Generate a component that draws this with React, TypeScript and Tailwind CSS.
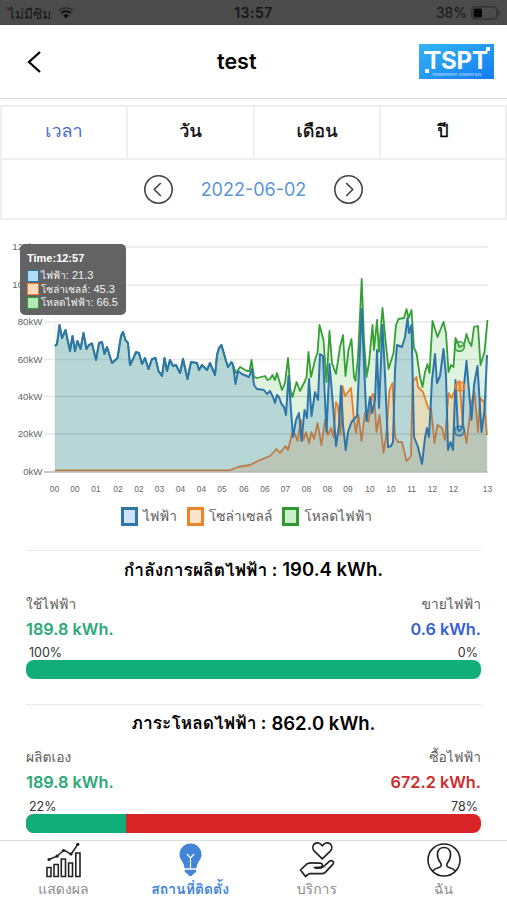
import React, { useState } from 'react';

type Point = [number, number];

const gridPoints: Point[] = [
  [55, 346], [57, 344], [59.5, 325], [62, 338], [65.5, 330], [70, 351], [72.5, 336], [75, 351], [77.5, 341], [80.5, 349],
  [83.5, 333], [86.5, 349], [89, 345], [92, 343.5], [96, 360], [99, 343], [102, 342], [104.5, 354], [107, 347], [112, 363],
  [117.5, 358], [121, 336], [123, 332], [125.5, 340], [128, 343], [130, 365], [133, 359], [136, 352], [139, 353], [142, 364],
  [145, 358], [148.5, 369], [152, 359], [155.5, 358], [158.5, 371], [162, 376], [164.5, 358], [167, 371], [170, 360], [173, 366],
  [176, 365], [180, 373], [183, 359], [187.5, 379], [191, 362], [197, 363], [199, 370], [202, 365], [207, 370], [210, 363],
  [215, 375], [217, 355], [219, 348], [221.5, 345], [226, 361], [228, 367], [231.5, 362], [233, 365], [235.5, 384], [238, 371],
  [242, 374], [249, 377], [252, 369], [254, 385], [257, 389], [264, 390], [267, 394], [270, 391], [273, 397], [275, 403],
  [277, 395], [279, 397], [281.5, 404], [284, 407], [286, 415], [288.5, 376], [293, 437], [296, 420], [299, 413], [301.5, 441],
  [304.5, 410], [307, 418], [309, 379], [311.5, 416], [315, 392], [318, 400], [320, 354], [323, 356], [326.5, 432], [329.5, 364],
  [333, 405], [336, 446], [339, 425], [341, 386], [343, 425], [345.7, 450], [348, 432], [351.5, 422], [357, 416], [361.7, 309],
  [366.5, 421], [370, 397], [372, 413], [375, 400], [377, 350], [379, 408], [382.5, 325], [385, 375], [388, 447], [391, 446],
  [393, 442], [395, 370], [397, 345], [402, 347], [405, 337], [407.5, 318], [409, 333], [411.5, 325], [414, 437], [418, 447],
  [422, 464], [425, 438], [427, 428], [429, 437], [432, 380], [435, 354], [437, 383], [440, 376], [443.5, 349], [446, 375],
  [448, 450], [450.5, 442], [453, 450], [455.5, 380], [458, 430], [459.5, 431], [462.5, 427], [464, 385], [466.5, 361], [471.5, 420],
  [474, 385], [477.5, 366], [481.5, 432], [484.5, 410], [487, 355],
];

const solarPoints: Point[] = [
  [55, 470.5], [229, 470.5], [238, 467], [250, 465], [260, 460], [270, 456], [276.5, 449], [280, 453], [285.5, 446], [288, 450],
  [292.5, 432], [295, 434], [297.5, 441], [301, 420], [303.5, 440], [306, 432], [309, 443], [311.5, 432], [314, 439], [317.5, 423],
  [321.5, 445], [325, 420], [328, 435], [331, 428], [333.5, 437], [336, 402], [338, 406], [340.5, 435], [342.5, 386], [345, 396],
  [351, 388], [354, 420], [356, 433], [358.5, 415], [361.5, 441], [365, 413], [368.5, 422], [372.5, 394], [374, 395], [376.5, 432],
  [379.5, 415], [383.5, 453], [386.5, 433], [389.5, 390], [392.5, 383], [395, 437], [398, 442], [402, 442], [406.5, 461], [411, 456],
  [412.5, 382], [416.5, 377], [418, 387], [423, 392], [428.5, 409], [431, 408], [434.5, 443], [437.5, 425], [442, 428], [445, 440],
  [448.5, 393], [451.5, 398], [455, 390], [457, 383], [459.5, 381], [462.5, 420], [466.5, 443], [471.5, 402], [474.5, 392], [478, 432],
  [480, 398], [484, 402], [487, 435],
];

// the load follows the grid line until the sun comes up
const loadPoints: Point[] = [
  ...gridPoints.slice(0, 58),
  [236, 373], [240, 367], [247, 371], [249.5, 371], [251.5, 360], [254, 377], [257, 378], [265, 376], [267.5, 380], [270, 379],
  [272.5, 375], [275, 380], [277, 373], [279, 380], [282, 390], [285, 383], [288, 358], [290.5, 390], [292.5, 397], [296.5, 382],
  [300, 391], [305, 381], [306.5, 377], [308.5, 352], [311, 377], [315.5, 358], [317.5, 353], [319.5, 325], [323.5, 340], [326.5, 382],
  [329.5, 331], [332, 363], [336, 374], [340, 347], [343, 335], [345.5, 376], [348.5, 350], [351.5, 339], [354, 377], [355.5, 381],
  [358, 357], [361.7, 279], [364, 340], [366.5, 377], [369, 363], [372.5, 325], [374, 350], [377, 320], [379, 352], [382.5, 308],
  [385.5, 340], [388.5, 369], [393.5, 353], [396, 325], [398.5, 319], [404, 318], [406.5, 309], [408.5, 318], [411.5, 310], [414, 348],
  [416.5, 353], [420, 377], [422.5, 387], [425, 372], [427.5, 364], [429.5, 373], [432.5, 321], [437.5, 337], [443.5, 322], [446, 333],
  [448.5, 372], [451, 365], [453.5, 367], [455.5, 338], [459.5, 347], [464, 345], [466.5, 334], [469, 342], [471.5, 346], [474, 327],
  [478, 326], [480.5, 365], [484.5, 352], [487.5, 320],
];

const yTicks = [
  { label: '120kW', y: 247 },
  { label: '100kW', y: 285 },
  { label: '80kW', y: 322 },
  { label: '60kW', y: 359.5 },
  { label: '40kW', y: 396.5 },
  { label: '20kW', y: 434 },
  { label: '0kW', y: 472 },
];

const xTicks: [string, number][] = [
  ['00', 54.5], ['00', 75], ['01', 96], ['02', 118], ['02', 139], ['03', 159.5], ['04', 180.5], ['04', 201.5], ['05', 222],
  ['06', 244], ['06', 265], ['07', 285.5], ['08', 306.5], ['08', 327.5], ['09', 348], ['10', 370], ['10', 391], ['11', 411.5],
  ['12', 432.5], ['12', 453.5], ['13', 487.5],
];

const toLine = (points: Point[]) => 'M' + points.map(([x, y]) => `${x} ${y}`).join('L');
const toArea = (points: Point[]) => `${toLine(points)}V472H55Z`;

const Chart = () => (
  <svg className="block w-full h-[274px]" viewBox="0 226 507 274" fontFamily="Liberation Sans, Arial, sans-serif">
    {yTicks.map((tick) => (
      <g key={tick.label}>
        <line x1="44" x2="487.5" y1={tick.y} y2={tick.y} stroke="#e9e9e9" strokeWidth="1.4" />
        <text x="42.5" y={tick.y + 3.2} fontSize="9.7" textAnchor="end" fill="#666">{tick.label}</text>
      </g>
    ))}
    <path d="M55 247V472" stroke="#eee" strokeWidth="1" />
    <path d={toArea(loadPoints)} fill="rgba(60,180,60,0.17)" />
    <path d={toLine(loadPoints)} fill="none" stroke="#33a033" strokeWidth="1.8" strokeLinejoin="round" />
    <path d={toArea(solarPoints)} fill="rgba(255,127,30,0.19)" />
    <path d={toLine(solarPoints)} fill="none" stroke="#e67e2c" strokeWidth="1.8" strokeLinejoin="round" />
    <path d={toArea(gridPoints)} fill="rgba(31,119,180,0.21)" />
    <path d={toLine(gridPoints)} fill="none" stroke="#2e75ab" strokeWidth="2" strokeLinejoin="round" />
    {yTicks.slice(4, 6).map((tick) => (
      <line key={tick.y} x1="55" x2="487" y1={tick.y} y2={tick.y} stroke="#000" strokeOpacity="0.08" />
    ))}
    <line x1="44" x2="487.5" y1="472" y2="472" stroke="#b9bdb9" strokeWidth="1.4" />
    <circle cx="459.5" cy="346.5" r="4.8" fill="rgba(60,180,60,0.2)" stroke="#33a033" strokeWidth="1.5" />
    <circle cx="460" cy="386.5" r="4.6" fill="rgba(255,127,30,0.5)" stroke="#f08030" strokeWidth="1.5" />
    <circle cx="459.5" cy="431" r="4.8" fill="rgba(31,119,180,0.2)" stroke="#2e75ab" strokeWidth="1.5" />
    {xTicks.map(([label, x]) => (
      <text key={x} x={x} y="492" fontSize="8.4" textAnchor="middle" fill="#666">{label}</text>
    ))}
  </svg>
);

const tooltipRows = [
  { label: 'ไฟฟ้า', value: '21.3', box: 'border-[#2e75ab] bg-[#b5dbf5]' },
  { label: 'โซล่าเซลล์', value: '45.3', box: 'border-[#f08030] bg-[#fbd9bd]' },
  { label: 'โหลดไฟฟ้า', value: '66.5', box: 'border-[#33a033] bg-[#b5e8b5]' },
];

const Tooltip = () => (
  <div className="absolute left-[20px] top-[18px] w-[106px] h-[71px] rounded-[5px] bg-[#636363] text-[#f3f3f3] px-[7px] pt-[8px] leading-[13.5px] font-['Liberation_Sans','Loma','Noto_Sans_Thai',sans-serif] whitespace-nowrap">
    <div className="font-bold h-[17px] text-[11px] text-white">Time:12:57</div>
    {tooltipRows.map((row) => (
      <div key={row.label} className="flex items-center h-[13.5px] gap-[2px]">
        <span className={`w-3 h-3 shrink-0 border ${row.box}`} />
        <span className="text-[10px]">
          {row.label}<span className="text-[11px]">: {row.value}</span>
        </span>
      </div>
    ))}
  </div>
);

interface EnergySectionProps {
  title: string;
  total: string;
  left: { label: string; value: string; percent: number };
  right: { label: string; value: string; percent: number; textClass: string };
}

const EnergySection: React.FC<EnergySectionProps> = ({ title, total, left, right }) => (
  <section className="mx-[26px] h-[153.5px] shrink-0 border-t border-[#ebebeb]">
    <h2 className="flex justify-center items-center h-[38px] gap-[5px] text-black font-semibold whitespace-nowrap">
      <span className="text-[17.4px]">{title} :</span>
      <span className="text-[18.5px]">{total}</span>
    </h2>
    <div className="flex justify-between items-center h-[30px] text-[13.8px] text-[#5c5c5c]">
      <span>{left.label}</span>
      <span>{right.label}</span>
    </div>
    <div className="flex justify-between items-center h-[20px] text-[16.3px] font-semibold">
      <span className="text-[#2aa876]">{left.value}</span>
      <span className={right.textClass}>{right.value}</span>
    </div>
    <div className="flex justify-between items-end h-[21px] px-[3px] text-[12.5px] leading-[14px] text-[#333]">
      <span>{left.percent}%</span>
      <span>{right.percent}%</span>
    </div>
    <div className="flex h-[19px] rounded-[8px] overflow-hidden bg-[#d82426]">
      <div className="bg-[#12ae79]" style={{ width: `${left.percent}%` }} />
    </div>
  </section>
);

const ChartIcon = () => (
  <svg className="w-[36px] h-[36px]" viewBox="0 0 36 36" fill="none" stroke="#222" strokeWidth="1.6">
    <path d="M2 25.500h4v9h-4zM9 22.500h4.300v12H9zM16.300 17h4.200v17.500h-4.200zM23.600 21h3.900v13.500h-3.900zM30.800 11h4.200v23.500h-4.200z" />
    <path d="M4 17.500l8-3.300 7-6 7 4 6.700-9.700" strokeWidth="1.5" />
    <g fill="#222" stroke="none">
      <circle cx="4" cy="17.500" r="1.600" />
      <circle cx="12" cy="14.200" r="1.600" />
      <circle cx="18.500" cy="8.500" r="1.600" />
      <circle cx="26" cy="12" r="1.600" />
      <circle cx="32.800" cy="2.300" r="1.600" />
    </g>
  </svg>
);

const BulbIcon = () => (
  <svg className="w-[36px] h-[36px]" viewBox="0 0 36 36">
    <path d="M18.500 1.500a11 11 0 0 0-11 11c0 5.500 4.700 7.500 5 13.800h12c.3-6.300 5-8.300 5-13.800A11 11 0 0 0 18.500 1.500z" fill="#4285d8" />
    <path d="M12.800 27.800h11.400v2c-1 1-2 1.500-3 2.500l-1.700 1.700h-2l-1.700-1.700c-1-1-2-1.500-3-2.500z" fill="#4285d8" />
    <path d="M15 12l3.500 4 3.500-4M18.500 16v10" fill="none" stroke="#fff" strokeWidth="1.2" />
  </svg>
);

const ServiceIcon = () => (
  <svg className="w-[36px] h-[36px]" viewBox="0 0 36 36" fill="none" stroke="#222" strokeWidth="1.700" strokeLinejoin="round" strokeLinecap="round">
    <path d="M23.300 16.800l-8.200-8a5 5 0 0 1 .2-6.800c2.700-2.300 6.300-1 8 1.900 1.700-2.900 5.300-4.200 8-1.900a5 5 0 0 1 .2 6.800z" />
    <path d="M6.500 34.500L1.500 28l6.700-6.300c3-1.500 8-.5 13-.5 2.800.3 2.900 3.600.3 4l-6 .4c3 .9 7 .6 9-1l5.800-5.200c2.500-1.800 5.500.2 3.700 2.700l-8 8.500c-1 .9-2 1-3.500 1H10.200z" />
  </svg>
);

const ProfileIcon = () => (
  <svg className="w-[36px] h-[36px]" viewBox="0 0 36 36" fill="none" stroke="#222" strokeWidth="1.600">
    <circle cx="18" cy="18" r="16" />
    <path d="M6.500 29c2-2.300 4.500-3 7-3.700 2-.7 2.300-2.800.8-4.800-1.500-2-3.300-5-2.800-9 .4-3.700 3-6 6.500-6s6.100 2.300 6.500 6c.5 4-1.300 7-2.800 9-1.500 2-1.200 4.100.8 4.800 2.500.7 5 1.400 7 3.700" />
  </svg>
);

const Logo = () => (
  <div className="relative w-[75px] h-[35px] bg-gradient-to-br from-[#36b5f2] to-[#187af5] text-center text-white">
    <div className="font-bold text-[24px] leading-[33px] tracking-[-0.2px]">TSPT</div>
    <span className="absolute left-[5px] top-[7px] w-[5px] h-[3px] bg-white" />
    <span className="absolute left-[6px] bottom-[6px] w-1 h-1 bg-white" />
    <span className="absolute right-[4px] top-[3px] w-1 h-1 bg-white" />
    <div className="absolute inset-x-0 bottom-[2px] text-[3.500px] leading-[4px] opacity-80">TRANSPARENT GENERATION</div>
  </div>
);

const tabs = ['เวลา', 'วัน', 'เดือน', 'ปี'];

const menu = [
  { label: 'แสดงผล', icon: <ChartIcon /> },
  { label: 'สถานที่ติดตั้ง', icon: <BulbIcon />, active: true },
  { label: 'บริการ', icon: <ServiceIcon /> },
  { label: 'ฉัน', icon: <ProfileIcon /> },
];

const legend = [
  { label: 'ไฟฟ้า', box: 'border-[#2e75ab] bg-[#d0e2fa]' },
  { label: 'โซล่าเซลล์', box: 'border-[#eb8429] bg-[#fce3cc]' },
  { label: 'โหลดไฟฟ้า', box: 'border-[#2f992f] bg-[#cdeecd]' },
];

const App: React.FC = () => {
  const [activeTab, setActiveTab] = useState(0);

  return (
    <div className="w-[507px] h-[900px] flex flex-col overflow-hidden bg-white font-['Inter','Loma','Noto_Sans_Thai',sans-serif]">
      <div className="h-[25px] shrink-0 grid grid-cols-3 items-center bg-[#4b4b4b] text-[#161616] pl-[8px] pr-[6px] text-[14px]">
        <div className="flex items-center gap-[7px]">
          <span className="text-[13.700px] leading-[18px] pt-[2px]">ไม่มีซิม</span>
          <svg width="16" height="13" viewBox="0 0 16 13" fill="none">
            <path d="M1 4.500a10.500 10.500 0 0 1 14 0" stroke="#303030" strokeWidth="1.800" />
            <path d="M3.200 7a7.300 7.300 0 0 1 9.600 0" stroke="#111" strokeWidth="2" />
            <path d="M5.300 9.500a4.200 4.200 0 0 1 5.400 0L8 12.500z" fill="#080808" />
          </svg>
        </div>
        <span className="text-center font-semibold tracking-[0.5px] pr-[2px]">13:57</span>
        <div className="flex items-center justify-end gap-[4px]">
          <span className="text-[14px]">38%</span>
          <svg width="30" height="14" viewBox="0 0 30 14">
            <rect x="0.800" y="0.800" width="25" height="12.400" rx="3.500" fill="none" stroke="#303030" strokeWidth="1.200" />
            <rect x="2.500" y="2.500" width="8.500" height="9" rx="1.500" fill="#080808" />
            <path d="M27.500 4.500c2 .7 2 4.300 0 5z" fill="#303030" />
          </svg>
        </div>
      </div>

      <header className="h-[74px] shrink-0 grid grid-cols-[191px_93px_1fr] items-center pl-[26px] pr-[13px] border-b-[1.500px] border-[#dcdcdc]">
        <svg width="16" height="22" viewBox="0 0 16 22" fill="none" stroke="#000" strokeWidth="2.300">
          <path d="M14 1L3 11l11 10" />
        </svg>
        <h1 className="text-[21.500px] font-semibold text-black">test</h1>
        <div className="flex justify-end">
          <Logo />
        </div>
      </header>

      <div className="mt-[6px] h-[55px] shrink-0 grid grid-cols-[126px_127px_126px_1fr] border-y-2 border-[#efefef]">
        {tabs.map((tab, i) => (
          <button
            key={tab}
            onClick={() => setActiveTab(i)}
            className={`border-l-2 border-[#efefef] last:border-r-2 text-[18px] leading-[24px] pb-1 ${activeTab === i ? 'text-[#4a69d0]' : 'text-black [-webkit-text-stroke:0.3px_black]'}`}
          >
            {tab}
          </button>
        ))}
      </div>

      <div className="h-[60px] shrink-0 flex items-center justify-center gap-[28px] border-2 border-t-0 border-[#efefef]">
        <svg width="29" height="29" viewBox="0 0 29 29" fill="none" stroke="#444" strokeWidth="1.600">
          <circle cx="14.500" cy="14.500" r="13.700" />
          <path d="M16.800 8l-6.500 6.500 6.500 6.500" />
        </svg>
        <span className="text-[18px] text-[#5b95d3]">2022-06-02</span>
        <svg width="29" height="29" viewBox="0 0 29 29" fill="none" stroke="#444" strokeWidth="1.600">
          <circle cx="14.500" cy="14.500" r="13.700" />
          <path d="M12.200 8l6.500 6.500-6.500 6.500" />
        </svg>
      </div>

      <div className="relative mt-[6px] shrink-0">
        <Chart />
        <Tooltip />
      </div>

      <div className="h-[50px] shrink-0 flex justify-center pt-[6px] gap-[10px] pr-[14px] text-[13.700px] leading-[20px] text-[#5c5c5c]">
        {legend.map((item) => (
          <div key={item.label} className="flex h-[20px] items-center gap-[5px]">
            <span className={`w-[17px] h-[19px] border-[3px] ${item.box}`} />
            <span>{item.label}</span>
          </div>
        ))}
      </div>

      <EnergySection
        title="กำลังการผลิตไฟฟ้า"
        total="190.4 kWh."
        left={{ label: 'ใช้ไฟฟ้า', value: '189.8 kWh.', percent: 100 }}
        right={{ label: 'ขายไฟฟ้า', value: '0.6 kWh.', percent: 0, textClass: 'text-[#355fd3]' }}
      />
      <EnergySection
        title="ภาระโหลดไฟฟ้า"
        total="862.0 kWh."
        left={{ label: 'ผลิตเอง', value: '189.8 kWh.', percent: 22 }}
        right={{ label: 'ซื้อไฟฟ้า', value: '672.2 kWh.', percent: 78, textClass: 'text-[#cf2a2c]' }}
      />

      <nav className="fixed bottom-0 left-0 w-[507px] h-[60px] grid grid-cols-4 bg-white border-t border-[#d9ddd6]">
        {menu.map((item) => (
          <div key={item.label} className="flex flex-col items-center pt-px">
            {item.icon}
            <span className={`text-[14px] leading-[22px] whitespace-nowrap ${item.active ? 'text-[#4285d8] font-semibold' : 'text-[#8c8c8c]'}`}>{item.label}</span>
          </div>
        ))}
      </nav>
    </div>
  );
};

export default App;
